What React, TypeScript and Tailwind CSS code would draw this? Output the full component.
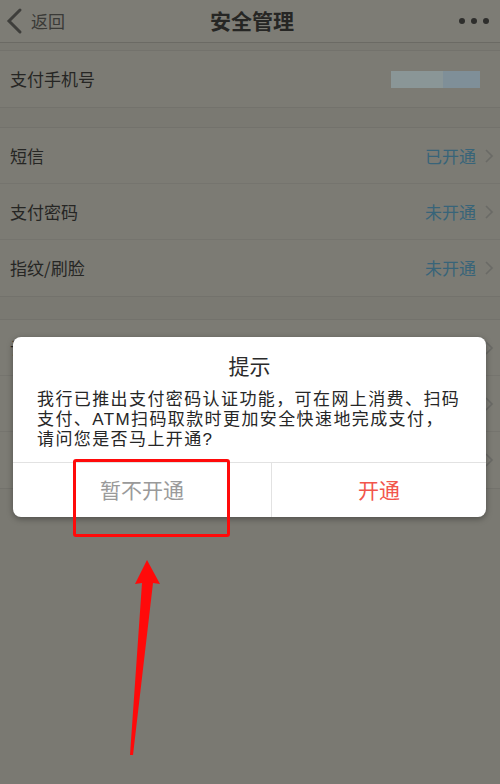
import React from 'react';

const font = { fontFamily: '"Noto Sans CJK SC", "Noto Sans", sans-serif' };
const bodyFont = { fontFamily: '"Liberation Sans", "Noto Sans CJK SC", sans-serif' };

type Row = { label?: string; value?: string };

function ListRow({ label, value, last }: Row & { last?: boolean }) {
  return (
    <div className={`h-[56px] flex items-center pl-[10px] pr-[6px] bg-[#7c7b74] ${last ? '' : 'border-b border-[#75746e]'}`}>
      {label && <span className="text-[17px] text-[#262624]">{label}</span>}
      <div className="flex-1" />
      {value && <span className="text-[17px] text-[#386479]">{value}</span>}
      <svg width="10" height="16" viewBox="0 0 10 16" className="ml-[8px]">
        <path d="M2 2 L8 8 L2 14" stroke="#6a6a66" strokeWidth="1.6" fill="none" />
      </svg>
    </div>
  );
}

export default function App() {
  return (
    <div className="relative w-[500px] h-[784px] overflow-hidden bg-[#7a7972]" style={font}>
      {/* Header */}
      <div className="h-[43px] flex items-center px-[5px] bg-[#7d7c75] border-b border-[#6b6a64]">
        <svg width="18" height="28" viewBox="0 0 18 28">
          <path d="M15 3 L4 14 L15 25" stroke="#3e3e3b" strokeWidth="3" fill="none" strokeLinecap="round" />
        </svg>
        <span className="ml-[8px] text-[17px] text-[#3a3a37]">返回</span>
        <div className="flex-1 text-center text-[21px] font-bold text-[#262624] pr-[20px]">安全管理</div>
        <div className="flex items-center gap-[6px] pr-[6px]">
          <span className="w-[6px] h-[6px] rounded-full bg-[#2e2e2c]" />
          <span className="w-[6px] h-[6px] rounded-full bg-[#2e2e2c]" />
          <span className="w-[6px] h-[6px] rounded-full bg-[#2e2e2c]" />
        </div>
      </div>

      <div className="h-[7px]" />
      <div className="h-[58px] flex items-center pl-[10px] pr-[6px] bg-[#7c7b74] border-y border-[#73726c]">
        <span className="text-[17px] text-[#262624]">支付手机号</span>
        <div className="flex-1" />
        <div className="flex h-[17px] mr-[14px]">
          <div className="w-[52px] bg-[#8a9697]" />
          <div className="w-[37px] bg-[#7f8f98]" />
        </div>
      </div>

      <div className="h-[19px]" />
      <div className="border-y border-[#73726c]">
        <ListRow label="短信" value="已开通" />
        <ListRow label="支付密码" value="未开通" />
        <ListRow label="指纹/刷脸" value="未开通" last />
      </div>

      <div className="h-[22px]" />
      <div className="border-y border-[#73726c]">
        <ListRow label="认证" value="已开通" />
        <ListRow />
        <ListRow last />
      </div>

      {/* Dialog */}
      <div className="absolute left-[13px] top-[337px] w-[473px] bg-white rounded-[8px] shadow-[0_2px_6px_rgba(0,0,0,0.35)] overflow-hidden">
        <div className="pt-[14px] text-center text-[21px] leading-[28px] text-[#2b2b2b]">提示</div>
        <div
          className="px-[24px] pt-[11px] pb-[12px] text-[17px] leading-[20px] text-[#262626] tracking-[1.4px] whitespace-nowrap"
          style={bodyFont}
        >
          <div>我行已推出支付密码认证功能，可在网上消费、扫码</div>
          <div>支付、ATM扫码取款时更加安全快速地完成支付，</div>
          <div>请问您是否马上开通?</div>
        </div>
        <div className="flex h-[55px] border-t border-[#e2e2e2]">
          <div className="w-[259px] flex items-center justify-center text-[21px] text-[#9a9a9a] border-r border-[#e2e2e2]">
            暂不开通
          </div>
          <div className="flex-1 flex items-center justify-center text-[21px] text-[#f2554c]">开通</div>
        </div>
      </div>

      {/* Annotation box */}
      <div className="absolute left-[73px] top-[459px] w-[157px] h-[78px] border-[3px] border-[#ff0a0a] rounded-[3px]" />

      {/* Annotation arrow */}
      <svg className="absolute left-0 top-0" width="500" height="784" viewBox="0 0 500 784">
        <polygon points="147,560 160,584 153,583 133,755 130,755 142,583 135,584" fill="#ff0a0a" />
      </svg>
    </div>
  );
}
